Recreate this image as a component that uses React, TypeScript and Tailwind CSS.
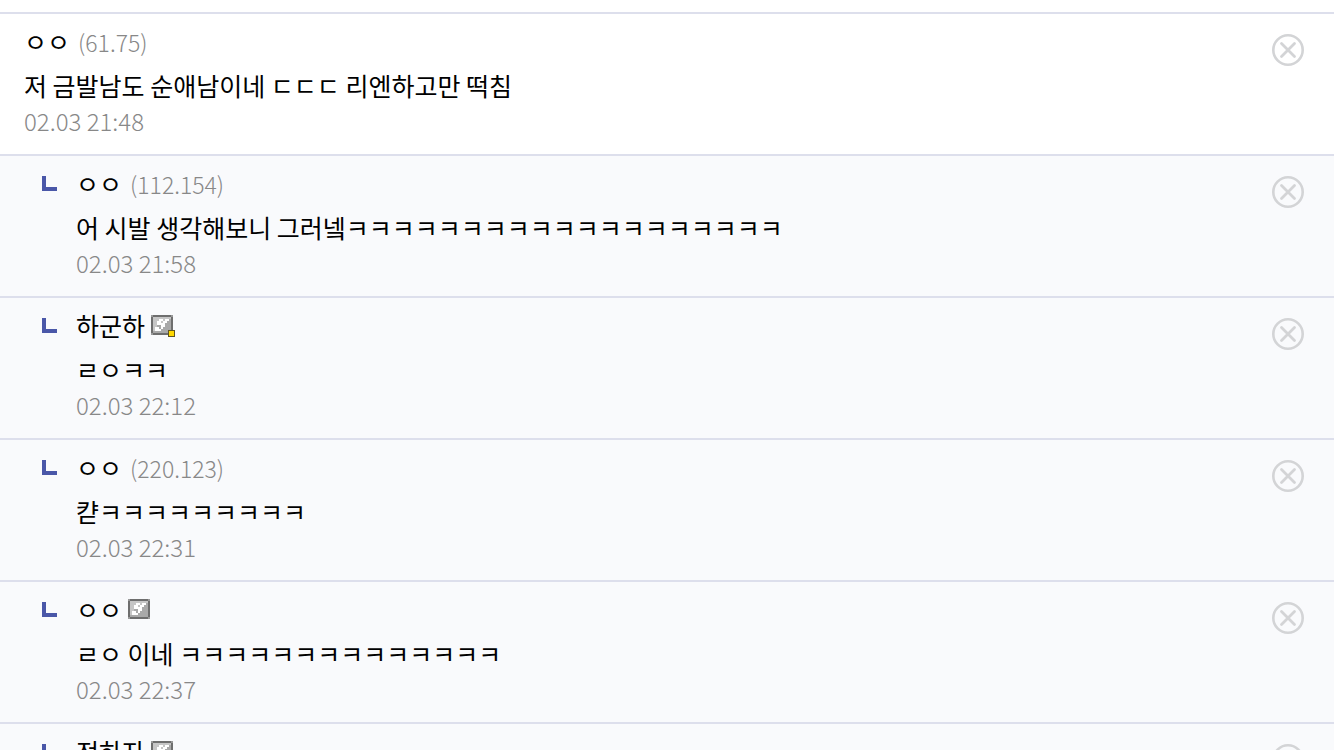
type Badge = 'fixed' | 'semi';

type Comment = {
  id: number;
  name: string;
  ip?: string;
  badge?: Badge;
  text: string;
  date: string;
  reply: boolean;
};

const COMMENTS: Comment[] = [
  { id: 1, name: 'ㅇㅇ', ip: '61.75', text: '저 금발남도 순애남이네 ㄷㄷㄷ 리엔하고만 떡침', date: '02.03 21:48', reply: false },
  { id: 2, name: 'ㅇㅇ', ip: '112.154', text: '어 시발 생각해보니 그러넼ㅋㅋㅋㅋㅋㅋㅋㅋㅋㅋㅋㅋㅋㅋㅋㅋㅋㅋㅋ', date: '02.03 21:58', reply: true },
  { id: 3, name: '하군하', badge: 'semi', text: 'ㄹㅇㅋㅋ', date: '02.03 22:12', reply: true },
  { id: 4, name: 'ㅇㅇ', ip: '220.123', text: '캳ㅋㅋㅋㅋㅋㅋㅋㅋㅋ', date: '02.03 22:31', reply: true },
  { id: 5, name: 'ㅇㅇ', badge: 'fixed', text: 'ㄹㅇ 이네 ㅋㅋㅋㅋㅋㅋㅋㅋㅋㅋㅋㅋㅋㅋ', date: '02.03 22:37', reply: true },
  { id: 6, name: '전하자', badge: 'fixed', text: 'ㅋㅋㅋㅋ', date: '02.03 22:41', reply: true },
];

function ReplyMark() {
  return (
    <svg width="15" height="15" viewBox="0 0 15 15" className="mt-5 shrink-0" aria-hidden="true">
      <path d="M0 0H4V11H15V15H0Z" fill="#4a57a8" />
    </svg>
  );
}

function UserBadge({ type }: { type: Badge }) {
  return (
    <svg width="24" height="22" viewBox="0 0 24 22" shapeRendering="crispEdges" className="shrink-0" aria-hidden="true">
      <path d="M0 0H22V20H0Z" fill="#999" />
      <path d="M2 0H20V2H2ZM2 18H20V20H2ZM0 2H2V18H0ZM20 2H22V18H20Z" fill="#6e6e6e" />
      <path d="M2 2H20V18H2Z" fill="#a9a9a9" />
      <path d="M2 2H20V4H18V6H12V8H6V12H4V16H2Z" fill="#c6c6c6" />
      {/* pixel "g" */}
      <path
        d="M8 4H12V6H8ZM14 4H18V6H14ZM6 6H10V8H6ZM12 6H16V8H12ZM6 8H14V10H6ZM10 10H14V12H10ZM4 12H8V14H4ZM10 12H12V14H10ZM4 14H10V16H4Z"
        fill="#fff"
      />
      {type === 'semi' && (
        <>
          <path d="M17 15H24V22H17Z" fill="#5f5420" />
          <path d="M18 16H23V21H18Z" fill="#ffd800" />
        </>
      )}
    </svg>
  );
}

function DeleteButton() {
  return (
    <button type="button" aria-label="삭제" className="mt-5 size-8 shrink-0">
      <svg width="32" height="32" viewBox="0 0 32 32" fill="none" stroke="#d3d4d6" aria-hidden="true">
        <circle cx="16" cy="16" r="14.7" strokeWidth="2.6" />
        <path d="M9.5 9.5L22.5 22.5M22.5 9.5L9.5 22.5" strokeWidth="2.8" strokeLinecap="round" />
      </svg>
    </button>
  );
}

function CommentItem({ comment }: { comment: Comment }) {
  const { name, ip, badge, text, date, reply } = comment;

  return (
    <li
      className={`flex border-t-2 border-[#dddfec] pr-[30px] pb-[15px] ${
        reply ? 'gap-[19px] bg-[#f9fafc] pl-[42px]' : 'bg-white pl-6'
      }`}
    >
      {reply && <ReplyMark />}
      <div className="min-w-0 flex-1 pt-2.5">
        <div className="flex h-9 items-center gap-1.5">
          <span>{name}</span>
          {ip && <span className="pl-0.5 text-[23px] font-light text-[#888]">({ip})</span>}
          {badge && <UserBadge type={badge} />}
        </div>
        <p className="mt-[7px] leading-9">{text}</p>
        <time className="block text-[24px] leading-9 font-light text-[#888]">{date}</time>
      </div>
      <DeleteButton />
    </li>
  );
}

export default function App() {
  return (
    <main className="h-screen overflow-hidden bg-white pt-3 font-['Noto_Sans_CJK_KR',sans-serif] text-[25px] text-black">
      <ul>
        {COMMENTS.map((comment) => (
          <CommentItem key={comment.id} comment={comment} />
        ))}
      </ul>
    </main>
  );
}
